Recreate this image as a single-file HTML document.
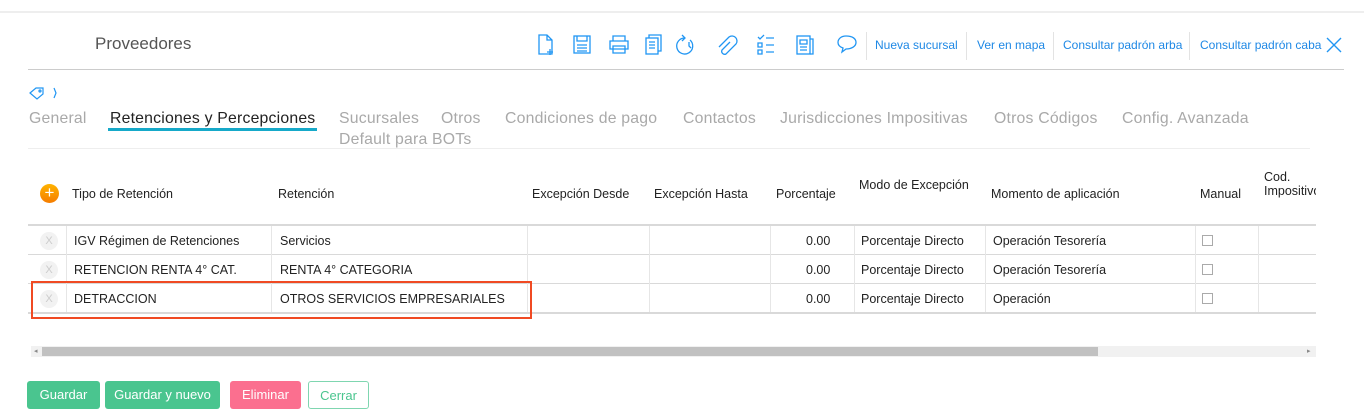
<!DOCTYPE html>
<html><head><meta charset="utf-8"><style>
*{margin:0;padding:0;box-sizing:border-box}
body{width:1364px;height:417px;background:#fff;font-family:"Liberation Sans",sans-serif;position:relative;overflow:hidden;color:#333}
.a{position:absolute;white-space:nowrap}
.lk{color:#1e88e5;font-size:12px;top:38px}
.sep{position:absolute;top:32px;width:1px;height:28px;background:#e3e3e3}
.tab{position:absolute;top:110px;font-size:15.8px;color:#a9a9a9;letter-spacing:.2px}
.hd{font-size:12.5px;color:#222;position:absolute}
.hl{position:absolute;left:28px;width:1288px;height:2px;background:#d9d9d9}
.vl{position:absolute;width:1px;background:#e6e6e6}
.c{position:absolute;font-size:12.5px;color:#222}
.x{position:absolute;left:40px;width:18px;height:18px;border-radius:50%;background:#f2f2f2;color:#ccc;font-size:11px;text-align:center;line-height:18px}
.cb{position:absolute;left:1202px;width:11px;height:11px;border:1px solid #aaa;background:#fff}
.btn{position:absolute;top:381px;height:28px;border-radius:3px;color:#fff;font-size:13px;line-height:28px;text-align:center}
</style></head><body>
<div class="a" style="left:0;top:11px;width:1364px;height:2px;background:#eee"></div>
<div class="a" style="left:95px;top:34px;font-size:17px;color:#555">Proveedores</div>
<svg class="a" style="left:530px;top:32px" width="330" height="26" fill="none" stroke="#2196f3" stroke-width="1.3">
<path d="M9 3h8l5 5v14H9z M17 3v5h5 M20 17v6 M17 20h6"/>
<rect x="44" y="4" width="16" height="17"/><path d="M47 4v5h10V4 M47 13h10 M47 16h10 M47 19h10"/>
<path d="M83 9V4h12v5 M80 9h18v8h-18z M83 14h12v7H83z M85 17h8"/>
<rect x="116" y="6" width="12" height="16"/><path d="M119 6V3h12v16h-3 M119 10h6 M119 13h6 M119 16h6"/>
<path d="M155 6a8 8 0 1 0 5 2 M152 3l3 3-3 3 M159 10v4l2 2"/>
<path d="M200 10l-8 8a3 3 0 0 0 4 4l10-10a5 5 0 0 0-7-7l-10 10"/>
<path d="M228 5l2 2 4-4 M228 11h4v4h-4z M228 18h4v4h-4z M236 6h8 M236 13h8 M236 20h8"/>
<rect x="267" y="4" width="13" height="18"/><path d="M270 8h7v4h-7z M270 15h7 M270 18h7 M280 7h3v15h-3"/>
<path d="M316 4c7 0 10 3 10 6.5s-4 6.5-10 6.5l-4 3 1-4c-3-1-5-3-5-5.5C308 7 311 4 316 4z"/>
</svg>
<div class="sep" style="left:866px"></div>
<div class="a lk" style="left:875px">Nueva sucursal</div>
<div class="sep" style="left:966px"></div>
<div class="a lk" style="left:977px">Ver en mapa</div>
<div class="sep" style="left:1053px"></div>
<div class="a lk" style="left:1063px">Consultar padrón arba</div>
<div class="sep" style="left:1189px"></div>
<div class="a lk" style="left:1200px">Consultar padrón caba</div>
<svg class="a" style="left:1326px;top:37px" width="16" height="16" stroke="#2196f3" stroke-width="1.4"><path d="M1 1l14 14M15 1L1 15"/></svg>
<div class="a" style="left:28px;top:69px;width:1316px;height:1px;background:#ccc"></div>
<svg class="a" style="left:29px;top:86px" width="30" height="14" fill="none" stroke="#2196f3" stroke-width="1.2"><path d="M1 7l6-5h7v6l-6 5z"/><circle cx="11" cy="5" r="1"/><path d="M25 2l2 5-2 5"/></svg>
<div class="tab" style="left:29px">General</div>
<div class="tab" style="left:110px;color:#222">Retenciones y Percepciones</div>
<div class="a" style="left:108px;top:128px;width:209px;height:3px;background:#16a9c9"></div>
<div class="tab" style="left:339px">Sucursales</div>
<div class="tab" style="left:441px">Otros</div>
<div class="tab" style="left:505px">Condiciones de pago</div>
<div class="tab" style="left:683px">Contactos</div>
<div class="tab" style="left:780px">Jurisdicciones Impositivas</div>
<div class="tab" style="left:994px">Otros Códigos</div>
<div class="tab" style="left:1122px">Config. Avanzada</div>
<div class="tab" style="left:339px;top:131px">Default para BOTs</div>
<div class="a" style="left:28px;top:148px;width:1282px;height:1px;background:#eee"></div>
<div class="a" style="left:40px;top:184px;width:19px;height:19px;border-radius:50%;background:linear-gradient(#ffb300,#f57c00);color:#fff;font-size:17px;line-height:18px;text-align:center">+</div>
<div class="hd" style="left:72px;top:187px">Tipo de Retención</div>
<div class="hd" style="left:278px;top:187px">Retención</div>
<div class="hd" style="left:532px;top:187px">Excepción Desde</div>
<div class="hd" style="left:654px;top:187px">Excepción Hasta</div>
<div class="hd" style="left:776px;top:187px">Porcentaje</div>
<div class="hd" style="left:859px;top:178px">Modo de Excepción</div>
<div class="hd" style="left:991px;top:187px">Momento de aplicación</div>
<div class="hd" style="left:1200px;top:187px">Manual</div>
<div class="hd" style="left:1264px;top:170px;width:52px;overflow:hidden;line-height:14px">Cod.<br>Impositivo</div>
<div class="hl" style="top:224px"></div>
<div class="hl" style="top:254px;height:1px"></div>
<div class="hl" style="top:283px;height:1px"></div>
<div class="hl" style="top:312px"></div>
<div class="vl" style="left:66px;top:226px;height:86px"></div>
<div class="vl" style="left:271px;top:226px;height:86px"></div>
<div class="vl" style="left:527px;top:226px;height:86px"></div>
<div class="vl" style="left:649px;top:226px;height:86px"></div>
<div class="vl" style="left:770px;top:226px;height:86px"></div>
<div class="vl" style="left:854px;top:226px;height:86px"></div>
<div class="vl" style="left:985px;top:226px;height:86px"></div>
<div class="vl" style="left:1195px;top:226px;height:86px"></div>
<div class="vl" style="left:1258px;top:226px;height:86px"></div>
<div class="x" style="top:232px">X</div><div class="x" style="top:261px">X</div><div class="x" style="top:290px">X</div>
<div class="c" style="left:74px;top:234px">IGV Régimen de Retenciones</div>
<div class="c" style="left:280px;top:234px">Servicios</div>
<div class="c" style="left:806px;top:234px">0.00</div>
<div class="c" style="left:861px;top:234px">Porcentaje Directo</div>
<div class="c" style="left:993px;top:234px">Operación Tesorería</div>
<div class="cb" style="top:235px"></div>
<div class="c" style="left:74px;top:263px">RETENCION RENTA 4° CAT.</div>
<div class="c" style="left:280px;top:263px">RENTA 4° CATEGORIA</div>
<div class="c" style="left:806px;top:263px">0.00</div>
<div class="c" style="left:861px;top:263px">Porcentaje Directo</div>
<div class="c" style="left:993px;top:263px">Operación Tesorería</div>
<div class="cb" style="top:264px"></div>
<div class="c" style="left:74px;top:292px">DETRACCION</div>
<div class="c" style="left:280px;top:292px">OTROS SERVICIOS EMPRESARIALES</div>
<div class="c" style="left:806px;top:292px">0.00</div>
<div class="c" style="left:861px;top:292px">Porcentaje Directo</div>
<div class="c" style="left:993px;top:292px">Operación</div>
<div class="cb" style="top:293px"></div>
<div class="a" style="left:31px;top:281px;width:501px;height:38px;border:2.5px solid #f04a23"></div>
<div class="a" style="left:31px;top:346px;width:1285px;height:11px;background:#f1f1f1"></div>
<div class="a" style="left:42px;top:347px;width:1056px;height:9px;background:#c1c1c1"></div>
<div class="a" style="left:34px;top:347px;font-size:7px;color:#888">◂</div>
<div class="a" style="left:1307px;top:347px;font-size:7px;color:#888">▸</div>
<div class="btn" style="left:27px;width:73px;background:#4ac58f">Guardar</div>
<div class="btn" style="left:105px;width:115px;background:#4ac58f">Guardar y nuevo</div>
<div class="btn" style="left:230px;width:71px;background:#fb6f8f">Eliminar</div>
<div class="btn" style="left:308px;width:61px;background:#fff;border:1px solid #7fd6b0;color:#4ac58f">Cerrar</div>
</body></html>
